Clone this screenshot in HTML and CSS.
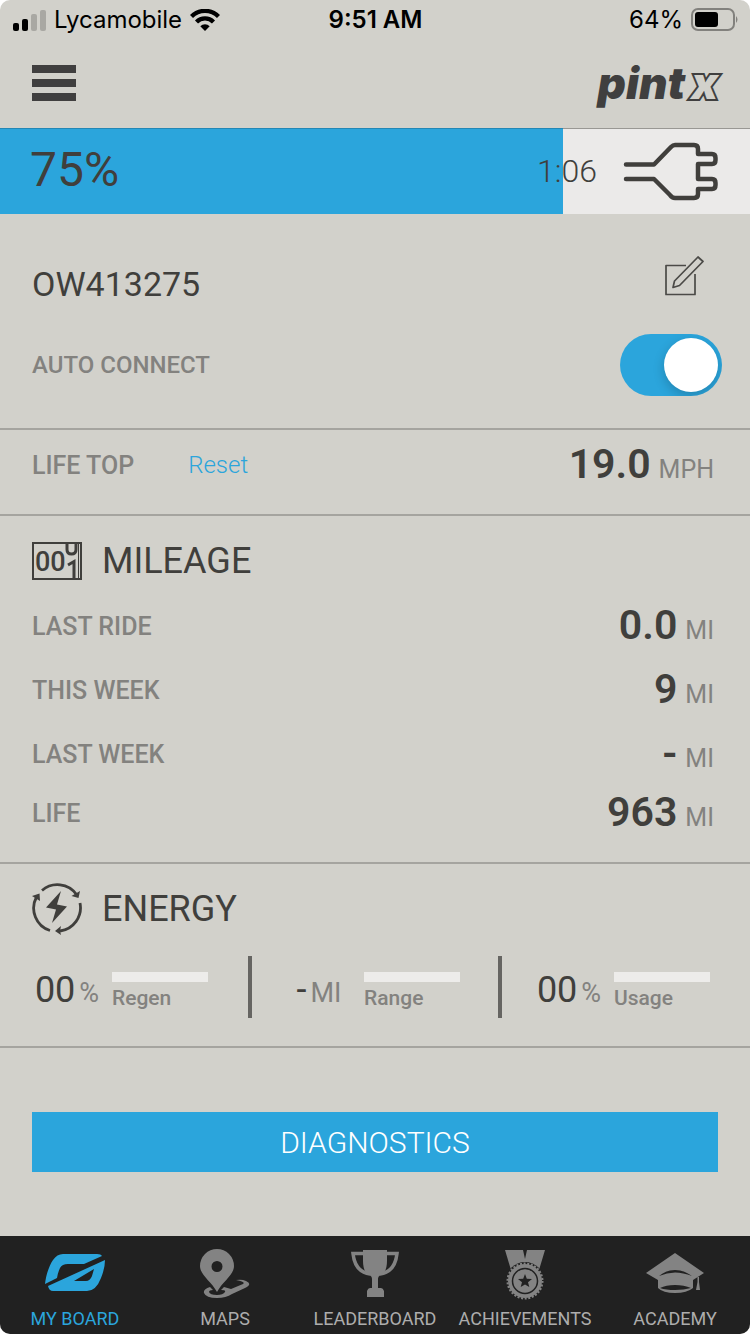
FILE: index.html
```html
<!DOCTYPE html>
<html lang="en">
<head>
<meta charset="utf-8">
<meta name="viewport" content="width=device-width, initial-scale=1">
<title>My Board</title>
<link rel="stylesheet" href="styles.css">
</head>
<body>
<div class="app">
  <div class="status">
    <div class="status-left">
      <svg width="34" height="22" viewBox="0 0 34 22" aria-hidden="true">
        <rect x="1" y="14" width="6" height="8" rx="2"/>
        <rect x="10" y="10" width="6" height="12" rx="2"/>
        <rect x="19" y="5" width="6" height="17" rx="2" fill="#a9a8a3"/>
        <rect x="28" y="1" width="6" height="21" rx="2" fill="#a9a8a3"/>
      </svg>
      <span>Lycamobile</span>
      <svg width="30" height="22" viewBox="0 0 30 22" aria-hidden="true">
        <path d="M1.500 7.500a19 19 0 0 1 27 0M6.500 13a12 12 0 0 1 17 0" fill="none" stroke="#000" stroke-width="4.300"/>
        <path d="M15 22l-4.700-4.700a6.700 6.700 0 0 1 9.400 0z"/>
      </svg>
    </div>
    <div class="status-time">9:51 AM</div>
    <div class="status-right">
      <span>64%</span>
      <svg width="48" height="24" viewBox="0 0 48 24" aria-hidden="true">
        <rect x="1" y="1" width="42" height="21" rx="6" fill="none" stroke="#82817d" stroke-width="2"/>
        <rect x="4" y="4" width="23" height="15" rx="3"/>
        <path d="M45 8q3 3.500 0 7z" fill="#82817d"/>
      </svg>
    </div>
  </div>

  <header class="header">
    <button class="menu" aria-label="Menu"><span></span><span></span><span></span></button>
    <div class="brand">pint<span class="brand-x">x</span></div>
  </header>

  <div class="battery" role="progressbar" aria-label="Board battery" aria-valuenow="75" aria-valuemin="0" aria-valuemax="100">
    <div class="battery-fill" style="width:75%"></div>
    <span class="battery-level">75%</span>
    <span class="battery-time">1:06</span>
    <svg width="96" height="60" viewBox="0 0 96 60" fill="none" stroke="#403f3c" stroke-width="4.500" stroke-linecap="round" stroke-linejoin="round" aria-hidden="true">
      <path d="M3 22.500H31L48 5Q50 3 52 3H71Q75 3 75 7V12H89Q92.500 12 92.500 16V18Q92.500 22 89 22H75V37H89Q92.500 37 92.500 41V43Q92.500 47 89 47H75V52Q75 56 71 56H52Q49 56 47 53L31 37H3"/>
    </svg>
  </div>

  <main>
    <section class="section board">
      <div class="board-row">
        <h1 class="board-name">OW413275</h1>
        <button class="edit" aria-label="Edit name">
          <svg width="40" height="40" viewBox="0 0 40 40" fill="none" stroke="#4b4a47" stroke-width="1.700" stroke-linejoin="round" aria-hidden="true">
            <path d="M22 9.500H2V38.500H31V18"/>
            <path d="M9 31.500L10.500 25L34 1L39 5.500L15.500 29.500Z"/>
          </svg>
        </button>
      </div>
      <div class="toggle-row">
        <label class="label" for="auto">AUTO CONNECT</label>
        <input class="toggle" id="auto" type="checkbox" role="switch" checked>
      </div>
    </section>

    <section class="section top-speed">
      <div class="row">
        <span class="label">LIFE TOP</span>
        <button class="reset">Reset</button>
        <span class="value">19.0<span class="unit">MPH</span></span>
      </div>
    </section>

    <section class="section">
      <h2 class="heading">
        <svg width="50" height="38" viewBox="0 0 50 38" aria-hidden="true">
          <rect x="1" y="1" width="48" height="36" fill="none" stroke="#403f3c" stroke-width="2"/>
          <text class="reel" x="3" y="29">00</text>
          <g fill="none" stroke="#403f3c" stroke-width="3">
            <path d="M35 2V7.500Q35 12 39.500 12Q44 12 44 7.500V2"/>
            <path d="M36 23L42 19.500V36"/>
          </g>
          <path d="M46.500 2V36" stroke="#403f3c" stroke-width="1"/>
        </svg>
        MILEAGE
      </h2>
      <div class="row"><span class="label">LAST RIDE</span><span class="value">0.0<span class="unit">MI</span></span></div>
      <div class="row"><span class="label">THIS WEEK</span><span class="value">9<span class="unit">MI</span></span></div>
      <div class="row"><span class="label">LAST WEEK</span><span class="value">-<span class="unit">MI</span></span></div>
      <div class="row row-short"><span class="label">LIFE</span><span class="value">963<span class="unit">MI</span></span></div>
    </section>

    <section class="section energy">
      <h2 class="heading">
        <svg width="50" height="52" viewBox="0 0 50 52" fill="#403f3c" aria-hidden="true">
          <g fill="none" stroke="#403f3c" stroke-width="2.800">
            <path d="M10 7.500A23.500 23.500 0 0 1 44.500 11.500"/>
            <path d="M48 20A23.500 23.500 0 0 1 28 48"/>
            <path d="M18 47.500A23.500 23.500 0 0 1 4.500 14"/>
          </g>
          <path d="M39.500 13L48 8L46.500 15Z"/>
          <path d="M0 13L7.500 10.500L8 18Z"/>
          <path d="M23 48L29 43L28 48L29 52Z"/>
          <path d="M29 8L14 24.500L24 26.500L20 40L35 23.500L25 21.500Z"/>
        </svg>
        ENERGY
      </h2>
      <div class="metrics">
        <div class="metric">
          <div class="metric-value">00<span class="metric-unit">%</span></div>
          <div class="metric-side"><div class="metric-bar"></div>Regen</div>
        </div>
        <div class="metric">
          <div class="metric-value">-<span class="metric-unit">MI</span></div>
          <div class="metric-side"><div class="metric-bar"></div>Range</div>
        </div>
        <div class="metric">
          <div class="metric-value">00<span class="metric-unit">%</span></div>
          <div class="metric-side"><div class="metric-bar"></div>Usage</div>
        </div>
      </div>
    </section>

    <div class="action"><button class="diagnostics">DIAGNOSTICS</button></div>
  </main>

  <nav class="tabs">
    <a class="tab tab-active" href="#board">
      <svg width="62" height="54" viewBox="0 0 62 54" fill="#2ba5dc" aria-hidden="true">
        <path d="M1 36C2 27 5 18 9 12Q13 6 19 6H53Q57 6 58 8L40 16H24Q18 16 16 20Q14 24 13 30Z"/>
        <path fill-rule="evenodd" d="M4 38L61 12Q61 20 57 30Q52 43 43 43H9Q5 43 4 38ZM30 33H42Q46 33 48 28L50 21Z"/>
      </svg>
      MY BOARD
    </a>
    <a class="tab" href="#maps">
      <svg width="52" height="54" viewBox="0 0 52 54" fill="#838383" aria-hidden="true">
        <path fill-rule="evenodd" d="M18 1A17 17 0 0 0 1 18C1 27 12 33 18 44C24 33 35 27 35 18A17 17 0 0 0 18 1ZM18 13A5.500 5.500 0 1 1 18 24A5.500 5.500 0 1 1 18 13Z"/>
        <path fill-rule="evenodd" d="M11 39Q4 41 5 45Q7 50 18 50Q27 50 33 46L46 40Q54 36 47 33Q43 31 37 32Q47 34 44 36L32 41L25 39L22 42Q27 42 26 44Q24 47 18 47Q11 47 10 44Q10 42 14 42Z"/>
      </svg>
      MAPS
    </a>
    <a class="tab" href="#leaderboard">
      <svg width="50" height="54" viewBox="0 0 50 54" fill="#838383" aria-hidden="true">
        <path d="M13 2H37V13Q37 24 31 27Q28 28 28 31V40H31Q33 40 34 43V49H17V43Q18 40 20 40H22V31Q22 28 19 27Q13 24 13 13Z"/>
        <path d="M14 5.500H3Q5 24 20 26M36 5.500H47Q45 24 30 26" fill="none" stroke="#838383" stroke-width="3.500"/>
      </svg>
      LEADERBOARD
    </a>
    <a class="tab" href="#achievements">
      <svg width="40" height="54" viewBox="0 0 40 54" fill="#838383" aria-hidden="true">
        <path d="M0 2H18L20 11L22 2H40L34 22H6Z"/>
        <circle cx="20" cy="33" r="19" fill="#212121"/>
        <circle cx="20" cy="33" r="17"/>
        <circle cx="20" cy="33" r="17.500" fill="none" stroke="#838383" stroke-width="2" stroke-dasharray="2 1.660"/>
        <circle cx="20" cy="33" r="12.500" fill="none" stroke="#212121" stroke-width="1.500"/>
        <path d="M20 26L21.800 30.700L27 31L23 34.300L24.300 39L20 36.400L15.700 39L17 34.300L13 31L18.200 30.700Z" fill="#212121"/>
      </svg>
      ACHIEVEMENTS
    </a>
    <a class="tab" href="#academy">
      <svg width="58" height="54" viewBox="0 0 58 54" fill="#838383" aria-hidden="true">
        <path d="M29 5L58 25L47 32V40Q41 45 29 45Q17 45 12 40V32L0 25Z"/>
        <path d="M13 28Q20 22 29 22Q38 22 46 28Q37 24.500 29 24.500Q21 24.500 13 28ZM14 40Q20 37 29 37Q38 37 45 40Q38 42 29 42Q20 42 14 40Z" fill="#212121"/>
        <path d="M51.500 29H53V34L54 42H50L51.500 34Z"/>
      </svg>
      ACADEMY
    </a>
  </nav>
</div>
</body>
</html>
```
FILE: styles.css
```css
* { box-sizing: border-box; }

body {
  margin: 0;
  background: #fff;
  color: #403f3c;
  font-family: Roboto, "Liberation Sans", sans-serif;
}

button {
  padding: 0;
  border: 0;
  background: none;
  color: inherit;
  font: inherit;
  cursor: pointer;
}

svg { display: block; flex: none; }

.app {
  display: flex;
  flex-direction: column;
  min-height: 100vh;
  overflow: hidden;
  border-radius: 10px;
  background: #d2d1cb;
}

.status {
  display: grid;
  grid-template-columns: 1fr auto 1fr;
  align-items: center;
  height: 40px;
  padding: 0 11px 0 12px;
  color: #000;
  font: 400 24px/40px Inter, "Liberation Sans", sans-serif;
}

.status-left,
.status-right {
  display: flex;
  align-items: center;
  gap: 8px;
}

.status-right { justify-content: flex-end; }
.status-time { font-weight: 600; }

.header {
  display: flex;
  align-items: center;
  justify-content: space-between;
  height: 88px;
  padding: 0 32px 2px;
}

.menu { display: grid; gap: 6px; width: 44px; }
.menu span { height: 8px; background: #403f3f; }

.brand {
  display: flex;
  align-items: baseline;
  gap: 6px;
  font: italic 900 44px/48px Inter, "Open Sans", sans-serif;
  color: #403f3f;
}

.brand-x {
  color: #d2d1cb;
  -webkit-text-stroke: 4px #403f3f;
  paint-order: stroke fill;
}

.battery {
  position: relative;
  display: flex;
  align-items: center;
  height: 86px;
  padding: 0 31px 0 30px;
  border-top: 1px solid #999894;
  background: #ebeae9;
}

.battery-fill {
  position: absolute;
  top: -1px;
  bottom: 0;
  left: 0;
  border-top: 1px solid #2387b5;
  background: #2ba5dc;
}

.battery-level,
.battery-time,
.battery svg { position: relative; }

.battery-level { margin-right: auto; padding-bottom: 4px; font-size: 48px; }
.battery-time { margin-right: 26px; padding-bottom: 2px; font-size: 32px; font-weight: 300; }

.section { border-bottom: 2px solid #a5a49f; padding: 14px 32px 22px; }

.board { display: grid; gap: 14px; padding: 34px 28px 32px 32px; }
.board-row { display: flex; justify-content: space-between; height: 72px; padding-right: 18px; }
.board-name { margin: 0; font-size: 34px; font-weight: 400; line-height: 72px; }
.edit { height: 56px; }
.toggle-row { display: flex; align-items: center; justify-content: space-between; }

.label { color: #83827f; font-size: 25px; font-weight: 500; }
.toggle-row .label { font-size: 24px; }

.toggle {
  appearance: none;
  display: flex;
  justify-content: flex-end;
  width: 102px;
  height: 62px;
  margin: 0;
  padding: 4px;
  overflow: hidden;
  border-radius: 31px;
  background: #2ba5dc;
}

.toggle:not(:checked) { justify-content: flex-start; background: #a5a49f; }

.toggle::before {
  content: "";
  width: 54px;
  height: 54px;
  border-radius: 50%;
  background: #fff;
  box-shadow: 0 4px 12px rgba(0, 0, 0, .2);
}

.row { display: flex; align-items: center; height: 64px; }
.row-short, .top-speed .row { height: 54px; }
.top-speed { padding-top: 8px; }
.reset { margin-left: 54px; color: #2ba5dc; font-size: 24px; font-weight: 300; }

.value {
  display: flex;
  align-items: baseline;
  gap: 8px;
  margin-left: auto;
  padding: 0 4px 2px 0;
  font-size: 41px;
  font-weight: 600;
}

.unit { color: #83827f; font-size: 25px; font-weight: 400; }

.heading {
  display: flex;
  align-items: center;
  gap: 20px;
  height: 64px;
  margin: 0;
  padding-bottom: 2px;
  font-size: 36px;
  font-weight: 400;
}

.reel { fill: #403f3c; font-size: 27px; font-weight: 500; }

.energy { padding: 14px 0 28px; }
.energy .heading { margin: 0 32px 14px; }
.metrics { display: grid; grid-template-columns: repeat(3, 1fr); }

.metric {
  display: flex;
  gap: 12px;
  height: 62px;
  padding-left: 34px;
  border: solid #666562;
  border-width: 0 2px;
}

.metric:first-child { border-left-width: 0; }
.metric:last-child { border-right-width: 0; }

.metric-value {
  display: flex;
  align-items: baseline;
  justify-content: center;
  gap: 4px;
  width: 66px;
  font-size: 36px;
  font-weight: 400;
  line-height: 68px;
}

.metric-unit { color: #83827f; font-size: 27px; }
.metric-side { padding-top: 16px; color: #83827f; font-size: 21px; font-weight: 500; line-height: 32px; }
.metric-bar { width: 96px; height: 10px; background: #edecea; }

.action { padding: 64px 32px; }

.diagnostics {
  width: 100%;
  height: 60px;
  background: #2ba5dc;
  color: #fff;
  font-size: 30px;
  font-weight: 300;
}

.tabs {
  display: grid;
  grid-template-columns: repeat(5, 1fr);
  height: 98px;
  margin-top: auto;
  padding-top: 12px;
  background: #212121;
}

.tab {
  display: flex;
  flex-direction: column;
  align-items: center;
  gap: 5px;
  color: #adadad;
  font-size: 18px;
  line-height: 24px;
  text-decoration: none;
}

.tab-active { color: #2ba5dc; }
```
